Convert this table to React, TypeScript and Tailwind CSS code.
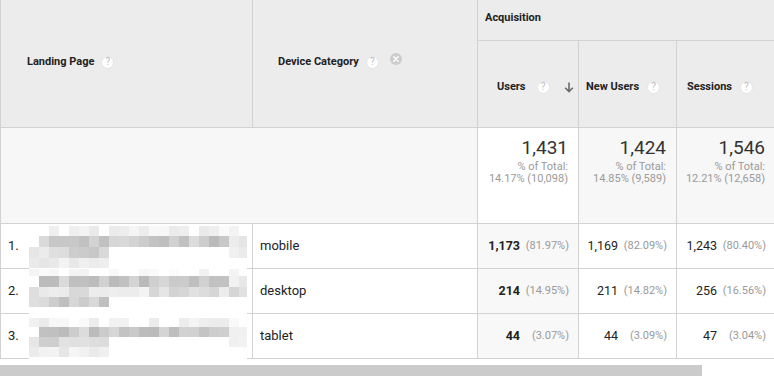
import React from "react";

function Help() {
  return (
    <span className="inline-flex items-center justify-center w-[13px] h-[13px] rounded-full bg-white border border-[#e4e4e4] text-[10px] text-[#bdbdbd] leading-none font-normal">
      ?
    </span>
  );
}

function CloseIcon() {
  return (
    <svg width="12" height="12" viewBox="0 0 12 12" className="relative -top-[3px]">
      <circle cx="6" cy="6" r="6" fill="#cdcdcd" />
      <path d="M3.8 3.8 L8.2 8.2 M8.2 3.8 L3.8 8.2" stroke="#ffffff" strokeWidth="1.4" strokeLinecap="round" />
    </svg>
  );
}

function SortArrow() {
  return (
    <svg width="10" height="11" viewBox="0 0 10 11">
      <path d="M5 0.5 V9.5 M1.2 5.8 L5 9.6 L8.8 5.8" stroke="#6b6b6b" strokeWidth="1.6" fill="none" />
    </svg>
  );
}

type Band = { y: number; h: number; x0: number; x1: number; lo: number; hi: number; p: number };

function Blur({ seed, bands }: { seed: number; bands: Band[] }) {
  let s = seed;
  const rnd = () => {
    s = (s * 9301 + 49297) % 233280;
    return s / 233280;
  };
  const rects: React.ReactElement[] = [];
  bands.forEach((b, bi) => {
    for (let i = b.x0; i < b.x1; i++) {
      if (rnd() > b.p) continue;
      const g = Math.round(b.lo + rnd() * (b.hi - b.lo));
      const c = `rgb(${g},${g},${g})`;
      rects.push(<rect key={`${bi}-${i}`} x={i * 10} y={b.y} width={10} height={b.h} fill={c} />);
    }
  });
  return (
    <svg width="218" height="45" viewBox="0 0 218 45" className="block self-start -mb-px">
      <rect x="0" y="0" width="218" height="45" fill="#ffffff" />
      {rects}
    </svg>
  );
}

const blurs: Band[][] = [
  [
    { y: 2, h: 10, x0: 0, x1: 21, lo: 232, hi: 250, p: 0.7 },
    { y: 12, h: 11, x0: 1, x1: 20, lo: 185, hi: 222, p: 1 },
    { y: 12, h: 11, x0: 20, x1: 22, lo: 228, hi: 242, p: 1 },
    { y: 23, h: 11, x0: 0, x1: 8, lo: 198, hi: 236, p: 1 },
    { y: 23, h: 11, x0: 20, x1: 22, lo: 228, hi: 244, p: 1 },
    { y: 34, h: 10, x0: 0, x1: 8, lo: 230, hi: 248, p: 1 },
  ],
  [
    { y: 0, h: 7, x0: 0, x1: 21, lo: 242, hi: 252, p: 0.4 },
    { y: 7, h: 11, x0: 1, x1: 20, lo: 182, hi: 222, p: 1 },
    { y: 7, h: 11, x0: 20, x1: 22, lo: 228, hi: 242, p: 1 },
    { y: 18, h: 10, x0: 0, x1: 22, lo: 210, hi: 244, p: 1 },
    { y: 28, h: 10, x0: 0, x1: 8, lo: 188, hi: 228, p: 1 },
  ],
  [
    { y: 4, h: 9, x0: 0, x1: 21, lo: 232, hi: 250, p: 0.7 },
    { y: 13, h: 10, x0: 1, x1: 20, lo: 185, hi: 222, p: 1 },
    { y: 13, h: 10, x0: 20, x1: 22, lo: 228, hi: 242, p: 1 },
    { y: 23, h: 10, x0: 0, x1: 8, lo: 198, hi: 236, p: 1 },
    { y: 23, h: 10, x0: 20, x1: 22, lo: 228, hi: 244, p: 1 },
    { y: 33, h: 10, x0: 0, x1: 8, lo: 230, hi: 248, p: 1 },
  ],
];

const rows = [
  { n: "1.", device: "mobile", u: ["1,173", "(81.97%)"], nu: ["1,169", "(82.09%)"], s: ["1,243", "(80.40%)"] },
  { n: "2.", device: "desktop", u: ["214", "(14.95%)"], nu: ["211", "(14.82%)"], s: ["256", "(16.56%)"] },
  { n: "3.", device: "tablet", u: ["44", "(3.07%)"], nu: ["44", "(3.09%)"], s: ["47", "(3.04%)"] },
];

function Val({ v, bold }: { v: string[]; bold?: boolean }) {
  return (
    <div className="flex items-center justify-end">
      <span className={`text-[12.5px] text-[#222] ${bold ? "font-bold" : ""}`}>{v[0]}</span>
      <span className="w-[49px] text-right text-[11px] text-[#9a9a9a]">{v[1]}</span>
    </div>
  );
}

export default function App() {
  const line = "border-[#d2d2d2]";
  return (
    <div className="w-[774px] h-[376px] bg-white overflow-hidden" style={{ fontFamily: "Roboto, 'Liberation Sans', sans-serif" }}>
      <div className="grid grid-cols-[253px_225px_101px_98px_97px] grid-rows-[41px_87px_96px_45px_45px_45px]">
        {/* header */}
        <div className={`row-span-2 bg-[#ececec] border-l border-r border-b ${line} flex items-center pl-[26px] gap-[7px] pb-[3px]`}>
          <span className="text-[11px] font-bold text-[#222]">Landing Page</span>
          <Help />
        </div>
        <div className={`row-span-2 bg-[#ececec] border-r border-b ${line} flex items-center pl-[25px] gap-[7px] pb-[3px]`}>
          <span className="text-[11px] font-bold text-[#222]">Device Category</span>
          <Help />
          <span className="ml-[4px] flex"><CloseIcon /></span>
        </div>
        <div className={`col-span-3 bg-[#ececec] border-b ${line} flex items-center pl-[7px] pb-[4px]`}>
          <span className="text-[11px] font-bold text-[#222]">Acquisition</span>
        </div>
        <div className={`bg-[#ececec] border-r border-b ${line} flex items-center pl-[19px] pr-[4px] pt-[6px]`}>
          <span className="text-[11px] font-bold text-[#222]">Users</span>
          <span className="ml-[11px] flex"><Help /></span>
          <span className="ml-auto flex"><SortArrow /></span>
        </div>
        <div className={`bg-[#ececec] border-r border-b ${line} flex items-center pl-[7px] gap-[8px] pt-[6px]`}>
          <span className="text-[11px] font-bold text-[#222]">New Users</span>
          <Help />
        </div>
        <div className={`bg-[#ececec] border-b ${line} flex items-center pl-[10px] gap-[8px] pt-[6px]`}>
          <span className="text-[11px] font-bold text-[#222]">Sessions</span>
          <Help />
        </div>

        {/* totals */}
        <div className={`col-span-2 bg-[#f7f7f7] border-l border-r border-b ${line}`} />
        {[
          ["1,431", "14.17% (10,098)", "bg-white border-r"],
          ["1,424", "14.85% (9,589)", "bg-[#f7f7f7] border-r"],
          ["1,546", "12.21% (12,658)", "bg-[#f7f7f7]"],
        ].map((t, i) => (
          <div key={i} className={`${t[2]} border-b ${line} flex flex-col items-end pt-[9px] ${i === 2 ? "pr-[9px]" : "pr-[10px]"}`}>
            <span className="text-[19px] leading-[22px] text-[#333]">{t[0]}</span>
            <span className="text-[11px] leading-[12px] text-[#9a9a9a] mt-[2px]">% of Total:</span>
            <span className="text-[11px] leading-[12px] text-[#9a9a9a]">{t[1]}</span>
          </div>
        ))}

        {/* data */}
        {rows.map((r, i) => (
          <React.Fragment key={i}>
            <div className={`bg-white border-l border-r border-b ${line} flex items-center pl-[7px]`}>
              <span className="w-[21px] text-[13px] text-[#222]">{r.n}</span>
              <Blur seed={17 + i * 53} bands={blurs[i]} />
            </div>
            <div className={`bg-white border-r border-b ${line} flex items-center pl-[7px]`}>
              <span className="text-[13px] text-[#222]">{r.device}</span>
            </div>
            <div className={`bg-[#f8f8f8] border-r border-b ${line} flex items-center justify-end pr-[9px]`}>
              <Val v={r.u} bold />
            </div>
            <div className={`bg-white border-r border-b ${line} flex items-center justify-end pr-[9px]`}>
              <Val v={r.nu} />
            </div>
            <div className={`bg-white border-b ${line} flex items-center justify-end pr-[8px]`}>
              <Val v={r.s} />
            </div>
          </React.Fragment>
        ))}
      </div>
      <div className="mt-[6px] w-[702px] h-[12px] bg-[#cbcbcb]" />
    </div>
  );
}
